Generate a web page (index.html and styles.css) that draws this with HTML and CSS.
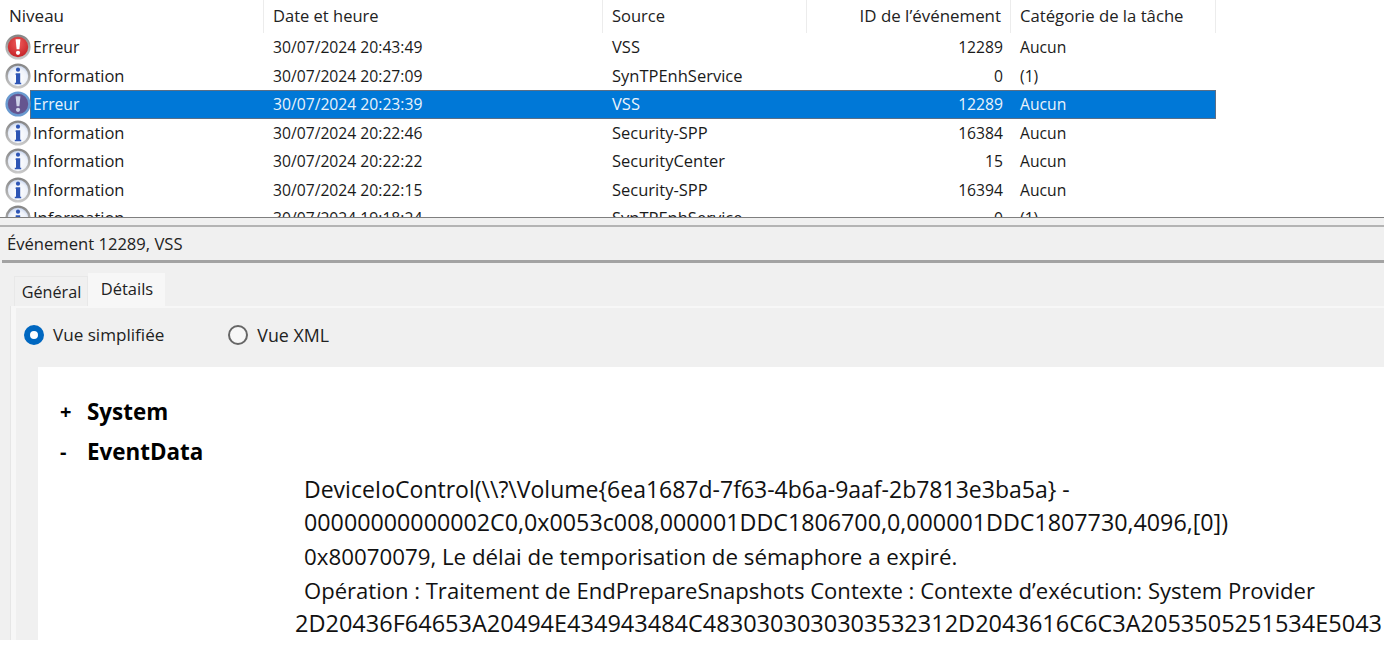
FILE: index.html
```html
<!DOCTYPE html>
<html lang="fr">
<head>
<meta charset="utf-8">
<title>Observateur</title>
<link rel="stylesheet" href="styles.css">
</head>
<body>
<svg class="defs" width="0" height="0" aria-hidden="true">
  <defs>
    <radialGradient id="gr" cx="50%" cy="35%" r="70%"><stop offset="0" stop-color="#ee5a5a"/><stop offset="1" stop-color="#bf1a1e"/></radialGradient>
    <radialGradient id="gi" cx="50%" cy="60%" r="62%"><stop offset="0" stop-color="#ffffff"/><stop offset="0.65" stop-color="#eef2fa"/><stop offset="1" stop-color="#b4c6e8"/></radialGradient>
    <linearGradient id="gs" x1="0" y1="0" x2="0" y2="1"><stop offset="0" stop-color="#868686"/><stop offset="1" stop-color="#c8c8c8"/></linearGradient>
    <symbol id="ico-err" viewBox="0 0 26 26">
      <circle cx="13" cy="13" r="11.4" fill="url(#gr)" stroke="url(#gs)" stroke-width="2.4"/>
      <path d="M10.6 5.2h4.8l-1 10h-2.8z" fill="#fff"/>
      <circle cx="13" cy="18.8" r="2.1" fill="#fff"/>
    </symbol>
    <symbol id="ico-info" viewBox="0 0 26 26">
      <circle cx="13" cy="13" r="11.4" fill="url(#gi)" stroke="url(#gs)" stroke-width="2.4"/>
      <circle cx="13" cy="6.7" r="2.1" fill="#2d55b5"/>
      <path d="M10.8 10.2h4.4v9.6h1v1.4H9.8v-1.4h1.2v-8h-.6z" fill="#2d55b5"/>
    </symbol>
    <symbol id="ico-err-sel" viewBox="0 0 26 26">
      <circle cx="13" cy="13" r="11.4" fill="#65558f" stroke="#6a9ad0" stroke-width="2.4"/>
      <path d="M10.6 5.2h4.8l-1 10h-2.8z" fill="#cfd4ea"/>
      <circle cx="13" cy="18.8" r="2.1" fill="#cfd4ea"/>
    </symbol>
  </defs>
</svg>
<div class="page">
  <section class="list">
    <div class="row head">
      <div class="hc c1">Niveau</div>
      <div class="hc c2">Date et heure</div>
      <div class="hc c3">Source</div>
      <div class="hc c4 num">ID de l’événement</div>
      <div class="hc c5">Catégorie de la tâche</div>
    </div>
    <div class="row">
      <div class="lvl"><svg class="ico"><use href="#ico-err"/></svg><span class="lvl-t short">Erreur</span></div>
      <div class="cell c2 digits">30/07/2024 20:43:49</div><div class="cell c3">VSS</div><div class="cell c4 num digits">12289</div><div class="cell c5 short">Aucun</div>
    </div>
    <div class="row">
      <div class="lvl"><svg class="ico"><use href="#ico-info"/></svg><span class="lvl-t">Information</span></div>
      <div class="cell c2 digits">30/07/2024 20:27:09</div><div class="cell c3">SynTPEnhService</div><div class="cell c4 num digits">0</div><div class="cell c5 short">(1)</div>
    </div>
    <div class="row sel">
      <div class="lvl"><svg class="ico"><use href="#ico-err-sel"/></svg><span class="lvl-t short">Erreur</span></div>
      <div class="cell c2 digits">30/07/2024 20:23:39</div><div class="cell c3">VSS</div><div class="cell c4 num digits">12289</div><div class="cell c5 short">Aucun</div>
    </div>
    <div class="row">
      <div class="lvl"><svg class="ico"><use href="#ico-info"/></svg><span class="lvl-t">Information</span></div>
      <div class="cell c2 digits">30/07/2024 20:22:46</div><div class="cell c3">Security-SPP</div><div class="cell c4 num digits">16384</div><div class="cell c5 short">Aucun</div>
    </div>
    <div class="row">
      <div class="lvl"><svg class="ico"><use href="#ico-info"/></svg><span class="lvl-t">Information</span></div>
      <div class="cell c2 digits">30/07/2024 20:22:22</div><div class="cell c3">SecurityCenter</div><div class="cell c4 num digits">15</div><div class="cell c5 short">Aucun</div>
    </div>
    <div class="row">
      <div class="lvl"><svg class="ico"><use href="#ico-info"/></svg><span class="lvl-t">Information</span></div>
      <div class="cell c2 digits">30/07/2024 20:22:15</div><div class="cell c3">Security-SPP</div><div class="cell c4 num digits">16394</div><div class="cell c5 short">Aucun</div>
    </div>
    <div class="row">
      <div class="lvl"><svg class="ico"><use href="#ico-info"/></svg><span class="lvl-t">Information</span></div>
      <div class="cell c2 digits">30/07/2024 19:18:24</div><div class="cell c3">SynTPEnhService</div><div class="cell c4 num digits">0</div><div class="cell c5 short">(1)</div>
    </div>
  </section>
  <section class="detail">
    <h2 class="title">Événement 12289, VSS</h2>
    <div class="tabs">
      <div class="tab">Général</div>
      <div class="tab active">Détails</div>
    </div>
    <div class="pane">
      <div class="radios">
        <label class="radio first"><span class="dot on"></span>Vue simplifiée</label>
        <label class="radio"><span class="dot"></span>Vue XML</label>
      </div>
      <div class="doc">
        <div class="node"><span class="tog">+</span><b>System</b></div>
        <div class="node"><span class="tog">-</span><b>EventData</b></div>
        <div class="data">
          <p class="l-a">DeviceIoControl(\\?\Volume{6ea1687d-7f63-4b6a-9aaf-2b7813e3ba5a} -</p>
          <p class="l-b">00000000000002C0,0x0053c008,000001DDC1806700,0,000001DDC1807730,4096,[0])</p>
          <p class="l-c">0x80070079, Le délai de temporisation de sémaphore a expiré.</p>
          <p class="l-d">Opération : Traitement de EndPrepareSnapshots Contexte : Contexte d’exécution: System Provider</p>
          <p class="l-e">2D20436F64653A20494E434943484C4830303030303532312D2043616C6C3A2053505251534E5043</p>
        </div>
      </div>
    </div>
  </section>
</div>
</body>
</html>
```
FILE: styles.css
```css
html, body { margin: 0; padding: 0; background: #fff; }
body { width: 1384px; height: 648px; overflow: hidden; font-family: "Open Sans", "Noto Sans", sans-serif; color: #1a1a1a; }
.defs { display: block; height: 0; }
.page { height: 640px; display: flex; flex-direction: column; overflow: hidden; }

.list { height: 217px; overflow: hidden; flex: none; font-size: 16.5px; }
.row { display: grid; grid-template-columns: 264px 339px 204px 204px 205px; height: 28.5px; line-height: 28px; width: 1216px; }
.head { height: 33px; line-height: 32px; }
.hc { border-right: 1px solid #ececec; padding-left: 9px; box-sizing: border-box; color: #222; height: 33px; white-space: nowrap; }
.head .c1 { font-size: 17px; }
.head .c4 { font-size: 16.9px; padding-right: 9px; }
.head .c5 { font-size: 16.7px; }
.c2, .c3, .c5 { padding-left: 9px; }
.cell { white-space: nowrap; }
.digits, .short { font-size: 15.7px; }
.num { text-align: right; padding-right: 8px; padding-left: 0; }
.lvl { display: flex; align-items: center; padding-left: 5px; white-space: nowrap; }
.ico { width: 26px; height: 26px; flex: none; }
.lvl-t { margin-left: 2px; flex: 1; }
.sel { color: #eaf3fb; }
.sel .lvl { align-items: stretch; }
.sel .ico { align-self: center; margin-right: -1px; position: relative; }
.sel .cell { background: #0078d7; box-shadow: inset 0 1px 0 #5c6f86, inset 0 -1px 0 #5c6f86; }
.sel .lvl-t { background: #0078d7; box-shadow: inset 1px 1px 0 #5c6f86, inset 0 -1px 0 #5c6f86; margin-left: 0; padding-left: 3px; }
.sel .c5 { box-shadow: inset 0 1px 0 #5c6f86, inset -1px -1px 0 #5c6f86; }

.detail { flex: 1; min-height: 0; background: #f0f0f0; border-top: 1.5px solid #7f7f7f; display: flex; flex-direction: column; }
.title { margin: 6.5px 0 0; height: 35px; box-sizing: border-box; border-top: 2px solid #b4b4b4; padding: 5px 0 0 7px; font-size: 16.6px; font-weight: 400; line-height: 24px; color: #222; flex: none; }
.tabs { margin-left: 2px; border-top: 3px solid #a3a3a3; display: flex; align-items: flex-end; height: 43px; padding-left: 12px; flex: none; }
.tab { font-size: 16.2px; height: 30px; line-height: 31px; width: 74px; text-align: center; box-sizing: border-box; border: 1px solid #e8e8e8; border-bottom: 0; color: #222; padding-left: 1px; }
.tab.active { font-size: 16.5px; height: 35px; line-height: 31px; width: 77px; background: #f7f7f7; border: 0; margin-bottom: -2px; position: relative; }
.pane { flex: 1; min-height: 0; margin-left: 11px; border-left: 5px solid #f7f7f7; border-top: 2px solid #f7f7f7; display: flex; flex-direction: column; box-shadow: -1px 0 0 #e6e6e6; }
.radios { height: 59px; flex: none; box-sizing: border-box; display: flex; align-items: center; padding: 0 0 5px 8px; font-size: 17.1px; color: #222; }
.radio { display: flex; align-items: center; gap: 9px; }
.radio.first { margin-right: 64px; }
.dot { width: 20px; height: 20px; border-radius: 50%; border: 2px solid #666; box-sizing: border-box; background: #f7f7f7; flex: none; }
.dot.on { border: 6px solid #0067c0; background: #fff; }
.radio:last-child { font-size: 17.8px; }
.doc { flex: 1; min-height: 0; margin-left: 22px; background: #fff; padding-top: 25px; overflow: hidden; color: #111; }
.node { display: flex; height: 40px; line-height: 40px; font-size: 22.4px; color: #000; }
.tog { width: 49px; padding-left: 22px; box-sizing: border-box; flex: none; font-weight: 700; font-size: 20px; }
.node b { font-weight: 700; }
.data { margin-left: 266px; font-size: 22px; line-height: 33.7px; white-space: nowrap; padding-top: 1px; }
.data p { margin: 0; }
.l-a { font-size: 23px; }
.l-b { font-size: 23.25px; }
.l-c { font-size: 22.3px; }
.l-d { font-size: 22.05px; }
.l-e { font-size: 23.5px; margin-left: -9px !important; }
```
